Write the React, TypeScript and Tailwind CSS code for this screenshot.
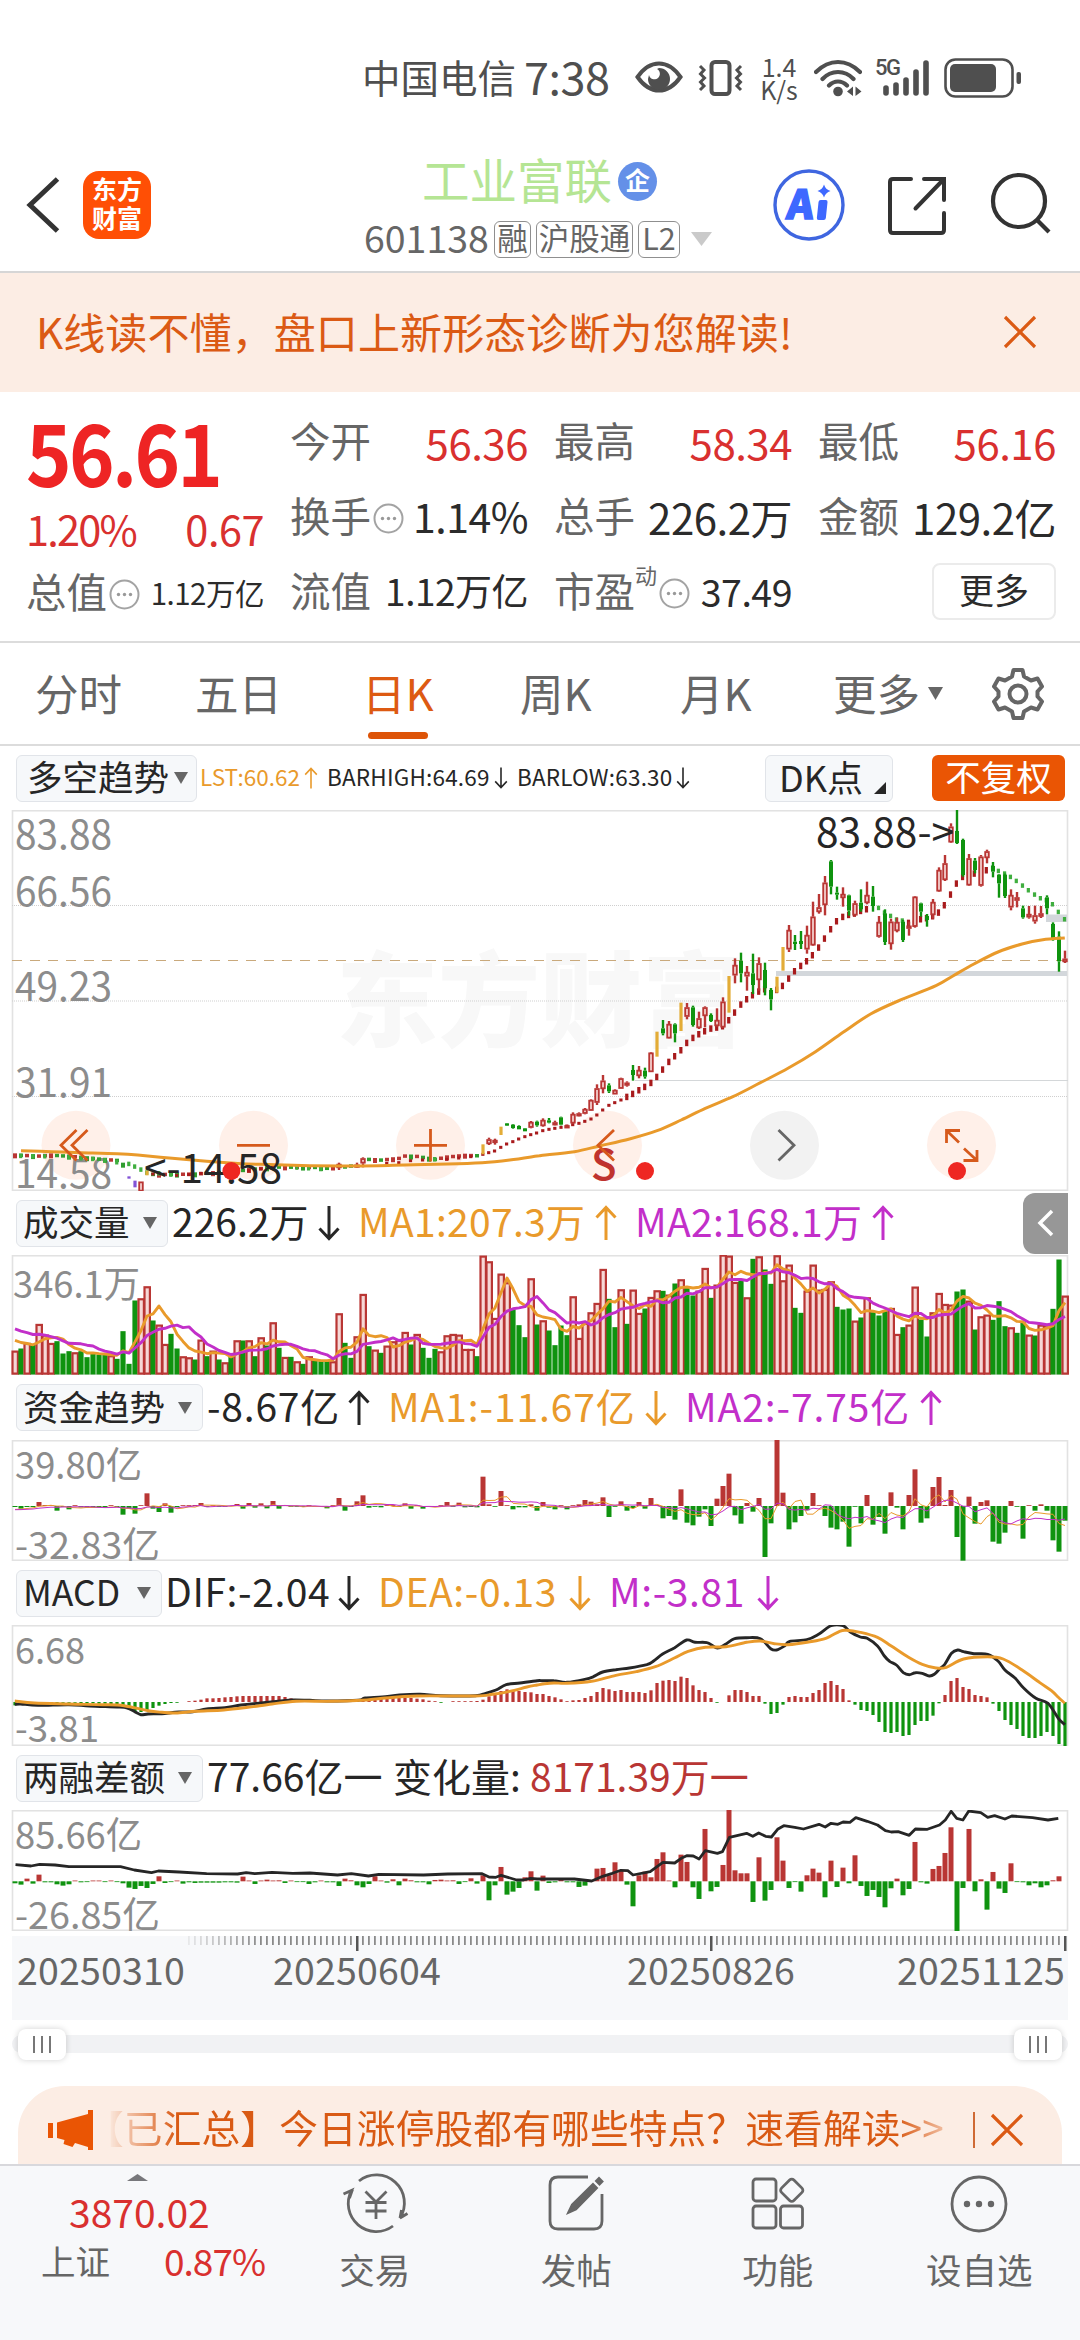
import type { ReactNode } from "react";
import clsx from "clsx";

const RED = "#b93634";
const GREEN = "#0f930f";
const ORANGE = "#e99a2b";
const PURPLE = "#c22fc9";
const INK = "#262626";
const FONT = '"Noto Sans CJK SC", "Noto Sans", sans-serif';

// One bar per trading day, 6px apart, first one centred on x=15.
const DAYS = 176;
const barX = (i: number) => 15 + 6 * i;

const VOLUME = [
  483, 477, 460, 465, 403, 435, 460, 455, 492, 485, 488, 485, 503, 490, 495, 495, 497, 508, 425, 523, 333, 326, 290, 393,
  405, 463, 433, 477, 500, 503, 510, 450, 500, 483, 510, 518, 500, 452, 453, 452, 500, 443, 468, 398, 475, 502, 502, 515,
  523, 500, 513, 515, 515, 515, 371, 460, 505, 440, 313, 470, 480, 490, 468, 455, 450, 427, 465, 433, 475, 505, 478, 485,
  437, 433, 435, 478, 478, 500, 198, 215, 385, 252, 278, 360, 407, 443, 266, 405, 392, 423, 467, 408, 437, 320, 445, 400,
  368, 340, 238, 328, 413, 299, 403, 300, 370, 357, 322, 302, 304, 315, 282, 269, 293, 318, 303, 235, 325, 285, 195, 198,
  277, 272, 323, 208, 200, 240, 283, 197, 272, 225, 355, 370, 303, 225, 300, 298, 275, 352, 360, 357, 393, 384, 323, 368,
  378, 365, 355, 433, 413, 405, 291, 390, 441, 368, 310, 343, 345, 306, 300, 333, 420, 380, 375, 391, 335, 410, 413, 430,
  397, 435, 438, 405, 405, 358, 210, 318,
].map((v) => (555 - v) / 3);

// Days that closed lower; shared by the volume bars and the flat part of the candles.
const DOWN_DAYS = new Set([
  1, 3, 7, 8, 9, 11, 12, 13, 14, 15, 17, 18, 19, 20, 23, 26, 27, 30, 32, 34, 36, 38, 40, 42, 44, 46, 48, 50, 51, 52, 55, 56,
  59, 61, 66, 68, 69, 70, 77, 83, 84, 85, 87, 89, 90, 91, 92, 99, 100, 102, 105, 108, 110, 112, 113, 116, 121, 123, 125, 126,
  130, 131, 137, 138, 139, 141, 143, 144, 145, 148, 151, 152, 157, 158, 160, 163, 164, 165, 167, 168, 170, 173, 174,
]);

const FUNDS = [
  -3, -8, -3, -3, 12, 3, 1, -14, -3, -10, 1, -4, -5, -5, -5, -3, 2, -3, -26, -8, -23, 2, 38, -8, -18, 8, -20, -3, 2, 1, 3, 9,
  -2, 1, -1, -2, 0, 6, -8, 9, -5, 8, -7, 15, -8, 1, -2, -1, -3, 1, -2, -2, -7, 2, 24, -14, -3, 14, 32, -5, -2, -4, 2, 1, -3,
  8, -8, 3, -8, -2, -3, 1, 12, -2, 10, -4, -3, -4, 88, 5, -1, 45, 2, -10, -4, -4, 5, -14, 12, -5, -10, 2, -10, 2, 5, 18, 13,
  5, 26, -33, -2, 14, -14, -6, 12, -8, 24, 3, -37, -30, -41, 50, -50, -58, -32, -10, -60, 22, 60, 97, -28, -53, 9, -17, 24,
  -153, -52, 198, 40, -70, -49, -30, -13, 39, 2, -30, -65, -70, -47, -122, -2, -52, 33, -56, -33, -83, 41, -5, -70, 33, 110,
  -50, -37, 57, 87, 3, 48, -93, -164, 28, -53, 12, 17, -107, -113, -80, 15, -2, -98, 2, -14, 5, -14, -103, -137, -44,
].map((v) => v / 3);

const MACD = [
  -10, -9, -8, -7, -6, -5, -4, -3, -2, -1, -2, -3, -4, -4, -5, -5, -6, -6, -12, -22, -30, -30, -26, -18, -11, -6, -3, -2, 0, 2,
  4, 7, 11, 11, 12, 14, 15, 17, 18, 18, 18, 18, 18, 18, 18, 15, 11, 9, 7, 6, 3, 1, 1, 1, 1, 1, 1, 3, 8, 9, 10, 11, 12, 12, 13,
  13, 12, 10, 8, 4, 1, -2, 0, 1, 2, 2, 2, 3, 7, 17, 25, 33, 38, 36, 33, 30, 29, 24, 24, 18, 14, 8, 2, 5, 6, 12, 18, 30, 42,
  38, 33, 36, 30, 30, 30, 27, 35, 57, 64, 66, 63, 76, 72, 50, 36, 30, 12, -2, 0, 20, 36, 36, 30, 18, 18, -5, -36, -33, -8, 15,
  18, 15, 15, 27, 36, 57, 63, 51, 39, 5, -8, -24, -27, -39, -60, -90, -93, -90, -102, -99, -69, -57, -57, -41, -4, 21, 63, 72,
  45, 39, 21, 18, 14, -5, -27, -54, -69, -81, -102, -108, -108, -102, -90, -102, -126, -132,
].map((v) => v / 3);

const MARGIN = [
  -6, -10, 8, -7, 20, -3, -3, -9, -13, -9, 1, -3, -2, 1, 2, -2, 1, -2, -6, -19, -23, -14, -20, -8, 15, -5, -2, 1, -7, -3, -5,
  -4, -4, -4, -4, -3, -3, -4, 14, 2, -8, 1, 5, 2, 3, -5, 2, -2, -2, -8, -3, 1, -3, -3, -14, 8, 3, -12, -18, -8, 15, 2, -4, 6,
  -12, 8, 3, -3, -3, -9, 4, 5, 1, 3, -8, -2, 9, -7, 18, -57, -12, 43, -40, -31, -20, 12, 30, -28, 17, -5, -3, 8, -3, -3, -17,
  -13, 2, 38, 40, 18, 57, 34, -10, -75, 18, 29, 12, 67, 87, 2, -18, 80, 58, -18, -53, 157, -30, -17, 49, 214, 33, 24, 24, -62,
  72, -58, -26, 132, 62, -20, -1, -31, 18, 38, 26, -48, 62, -17, 41, -6, 78, -14, -44, -26, -47, -78, -21, 8, -42, -23, 118,
  -3, -7, 37, 46, 85, 162, -149, -20, 157, -30, 6, -85, 28, -22, -35, 54, -1, -3, -12, -6, -18, -12, 3, 15,
].map((v) => v / 3);

// Curves are stored as two halves of the 1080px canvas, each on a 1568-wide
// grid with three units per pixel vertically.
type Pts = [number, number][];
const GRID_X = 1568 / 540;

function toCanvas(left: Pts, right: Pts, top: number): Pts {
  return [
    ...left.map(([x, y]) => [x / GRID_X, (y - top) / 3] as [number, number]),
    ...right.map(([x, y]) => [540 + x / GRID_X, (y - top) / 3] as [number, number]),
  ];
}

const linePath = (pts: Pts) => pts.map(([x, y], i) => `${i ? "L" : "M"}${x.toFixed(1)} ${y.toFixed(1)}`).join("");

// Catmull-Rom so the long averages come out round
function smoothPath(pts: Pts) {
  let d = `M${pts[0][0].toFixed(1)} ${pts[0][1].toFixed(1)}`;
  for (let i = 0; i < pts.length - 1; i++) {
    const p0 = pts[Math.max(i - 1, 0)];
    const p1 = pts[i];
    const p2 = pts[i + 1];
    const p3 = pts[Math.min(i + 2, pts.length - 1)];
    const c = [p1[0] + (p2[0] - p0[0]) / 6, p1[1] + (p2[1] - p0[1]) / 6, p2[0] - (p3[0] - p1[0]) / 6, p2[1] - (p3[1] - p1[1]) / 6, p2[0], p2[1]];
    d += "C" + c.map((n) => n.toFixed(1)).join(" ");
  }
  return d;
}

// Moving average over n days; `before` stands in for the days left of the chart.
function movingAverage(values: number[], n: number, before: number) {
  return values.map((_, i) => {
    let sum = 0;
    for (let k = i - n + 1; k <= i; k++) sum += k < 0 ? before : values[k];
    return sum / n;
  });
}

const PRICE_MA = toCanvas(
  [[61, 1232], [150, 1235], [235, 1238], [340, 1241], [400, 1245], [500, 1255], [600, 1264], [700, 1271], [800, 1274], [900, 1277], [1000, 1278], [1100, 1277], [1200, 1274], [1300, 1272], [1400, 1268], [1480, 1260], [1560, 1248]],
  [[8, 1246], [100, 1235], [176, 1217], [260, 1197], [340, 1172], [410, 1140], [480, 1105], [560, 1070], [640, 1028], [720, 985], [800, 935], [880, 877], [960, 822], [1040, 783], [1150, 737], [1200, 707], [1260, 672], [1330, 636], [1400, 612], [1460, 599], [1524, 594]],
  210,
);

const DIF = toCanvas(
  [[43, 433], [60, 432], [110, 436], [200, 434], [260, 438], [340, 441], [370, 444], [391, 455], [409, 464], [430, 462], [470, 461], [520, 456], [560, 455], [600, 447], [653, 443], [700, 435], [757, 429], [809, 424], [850, 420], [900, 421], [950, 423], [1040, 421], [1060, 414], [1110, 411], [1160, 405], [1220, 403], [1280, 407], [1380, 407], [1410, 400], [1440, 390], [1470, 374], [1510, 369], [1560, 362]],
  [[8, 362], [40, 362], [78, 367], [130, 358], [155, 350], [182, 336], [220, 329], [260, 324], [310, 314], [330, 303], [356, 282], [391, 263], [426, 240], [450, 247], [485, 248], [515, 264], [540, 252], [565, 236], [600, 233], [640, 236], [670, 266], [687, 270], [710, 258], [725, 244], [775, 239], [810, 222], [845, 197], [880, 197], [900, 215], [930, 231], [950, 235], [980, 258], [1000, 288], [1015, 304], [1035, 315], [1055, 338], [1072, 344], [1090, 338], [1110, 340], [1130, 348], [1145, 343], [1160, 327], [1175, 313], [1195, 280], [1213, 270], [1230, 275], [1260, 281], [1300, 283], [1330, 303], [1350, 330], [1380, 355], [1405, 385], [1440, 415], [1475, 430], [1505, 475], [1524, 494]],
  195,
);

const DEA = toCanvas(
  [[43, 423], [100, 429], [200, 432], [300, 434], [360, 437], [430, 452], [470, 457], [510, 459], [570, 454], [650, 450], [720, 442], [790, 432], [860, 424], [960, 424], [1050, 421], [1110, 415], [1210, 408], [1380, 408], [1430, 403], [1480, 394], [1530, 381], [1560, 375]],
  [[8, 372], [40, 369], [78, 370], [150, 364], [220, 346], [280, 335], [335, 320], [390, 294], [430, 274], [480, 262], [540, 260], [600, 247], [640, 243], [680, 251], [720, 254], [780, 246], [830, 235], [870, 214], [890, 211], [930, 217], [980, 232], [1020, 258], [1070, 292], [1110, 313], [1150, 324], [1180, 322], [1230, 297], [1300, 290], [1345, 297], [1400, 330], [1450, 367], [1485, 392], [1505, 412], [1524, 430]],
  195,
);

const MARGIN_LINE = toCanvas(
  [[45, 914], [90, 918], [115, 913], [160, 915], [200, 920], [350, 920], [390, 930], [440, 938], [460, 933], [520, 936], [600, 941], [690, 942], [715, 938], [740, 941], [790, 937], [850, 940], [900, 939], [980, 945], [1020, 941], [1070, 948], [1100, 943], [1230, 945], [1300, 942], [1400, 941], [1420, 951], [1440, 952], [1455, 946], [1500, 960], [1520, 960], [1540, 955], [1560, 957]],
  [[8, 957], [100, 957], [150, 963], [182, 949], [210, 940], [235, 931], [255, 932], [270, 945], [320, 935], [357, 907], [391, 909], [410, 895], [426, 887], [445, 888], [462, 897], [480, 872], [515, 880], [530, 875], [550, 832], [600, 820], [618, 829], [635, 819], [655, 829], [672, 831], [690, 808], [708, 797], [740, 802], [765, 807], [810, 793], [828, 801], [845, 790], [865, 793], [880, 786], [900, 787], [917, 773], [950, 784], [980, 795], [1003, 812], [1020, 816], [1040, 815], [1072, 826], [1090, 807], [1125, 808], [1160, 795], [1177, 780], [1194, 754], [1210, 775], [1228, 780], [1245, 753], [1280, 758], [1300, 772], [1320, 767], [1350, 777], [1370, 768], [1430, 773], [1475, 780], [1505, 775]],
  750,
);

// day, kind (r hollow, g solid, y solid yellow, p purple), high, body top, body bottom, low
type Candle = [number, string, number, number, number, number];
const CANDLES: Candle[] = [
  [19, "p", 1308, 1309, 1316, 1316], [20, "p", 1322, 1322, 1342, 1342], [21, "r", 1325, 1325, 1354, 1354], [22, "y", 1292, 1292, 1306, 1306],
  [54, "r", 1268, 1272, 1284, 1290], [57, "r", 1268, 1274, 1282, 1284], [58, "r", 1252, 1255, 1270, 1282], [78, "y", 1212, 1213, 1243, 1243],
  [79, "r", 1193, 1198, 1212, 1215], [80, "r", 1196, 1200, 1206, 1214], [81, "y", 1160, 1160, 1185, 1185], [82, "g", 1149, 1150, 1157, 1158],
  [83, "g", 1152, 1154, 1164, 1166], [84, "g", 1156, 1158, 1168, 1168], [85, "g", 1164, 1165, 1174, 1174], [86, "r", 1143, 1146, 1163, 1165],
  [87, "g", 1142, 1145, 1156, 1160], [88, "r", 1135, 1140, 1158, 1160], [89, "g", 1134, 1141, 1148, 1150], [90, "r", 1142, 1147, 1153, 1156],
  [91, "g", 1130, 1132, 1154, 1156], [92, "r", 1155, 1156, 1163, 1164], [93, "r", 1117, 1122, 1150, 1152], [94, "r", 1117, 1120, 1127, 1129],
  [95, "r", 1104, 1107, 1121, 1123], [96, "r", 1078, 1080, 1112, 1113], [97, "r", 1033, 1045, 1088, 1095], [98, "r", 1005, 1022, 1047, 1060],
  [99, "g", 1030, 1036, 1054, 1059], [100, "r", 1048, 1050, 1063, 1063], [101, "r", 1013, 1015, 1046, 1046], [102, "r", 1024, 1028, 1036, 1040],
  [103, "g", 975, 990, 1005, 1022], [104, "r", 978, 990, 1008, 1015], [105, "g", 983, 992, 1010, 1016], [106, "r", 936, 938, 996, 996],
  [107, "y", 875, 875, 950, 950], [108, "g", 840, 865, 880, 886], [109, "r", 843, 852, 895, 896], [110, "g", 850, 853, 880, 907],
  [111, "y", 788, 788, 873, 873], [112, "r", 789, 802, 830, 838], [113, "g", 797, 802, 855, 860], [114, "r", 815, 835, 864, 867],
  [115, "r", 799, 802, 828, 862], [116, "g", 820, 825, 843, 846], [117, "r", 805, 840, 858, 860], [118, "r", 772, 785, 862, 864],
  [119, "y", 708, 708, 818, 818], [120, "r", 655, 675, 706, 730], [121, "g", 638, 662, 700, 727], [122, "r", 678, 696, 709, 752],
  [123, "g", 641, 700, 735, 762], [124, "r", 652, 670, 720, 752], [125, "g", 668, 690, 745, 766], [126, "g", 744, 750, 778, 811],
  [127, "y", 710, 710, 758, 758], [128, "y", 621, 621, 692, 692], [129, "r", 555, 570, 628, 636], [130, "g", 585, 605, 612, 630],
  [131, "g", 573, 603, 612, 627], [132, "r", 557, 585, 628, 641], [133, "r", 485, 530, 616, 618], [134, "r", 462, 502, 516, 521],
  [135, "r", 408, 428, 495, 526], [136, "g", 360, 364, 440, 463], [137, "g", 440, 458, 464, 479], [138, "r", 442, 462, 474, 500],
  [139, "g", 464, 466, 512, 527], [140, "r", 482, 490, 526, 527], [141, "g", 448, 488, 508, 515], [142, "r", 425, 465, 489, 493],
  [143, "g", 438, 470, 498, 515], [144, "r", 528, 546, 590, 593], [145, "g", 508, 520, 606, 615], [146, "r", 536, 545, 612, 629],
  [147, "r", 533, 546, 573, 577], [148, "g", 540, 545, 600, 606], [149, "r", 545, 557, 566, 587], [150, "r", 468, 470, 560, 563],
  [151, "g", 488, 490, 515, 530], [152, "g", 522, 528, 540, 560], [153, "r", 477, 486, 525, 536], [154, "r", 382, 390, 454, 456],
  [155, "r", 345, 370, 420, 423], [156, "r", 250, 260, 307, 309], [157, "g", 210, 273, 309, 312], [158, "g", 296, 300, 405, 410],
  [159, "r", 342, 355, 436, 438], [160, "g", 354, 362, 390, 400], [161, "r", 345, 350, 437, 440], [162, "r", 329, 334, 354, 370],
  [163, "g", 366, 378, 395, 412], [164, "g", 402, 404, 430, 473], [165, "g", 401, 404, 468, 474], [166, "r", 448, 465, 502, 511],
  [167, "r", 456, 472, 482, 502], [168, "g", 497, 505, 532, 536], [169, "r", 498, 522, 532, 536], [170, "r", 497, 526, 544, 551],
  [171, "r", 498, 520, 530, 534], [172, "g", 466, 472, 505, 523], [173, "g", 547, 552, 594, 602], [174, "g", 574, 590, 664, 695],
  [175, "r", 632, 656, 666, 669],
];
const CANDLE_DAYS = new Set(CANDLES.map((c) => c[0]));

// Price level of the quiet stretch on the left, [day, level]
const QUIET: Pts = [
  [0, 1246], [4, 1249], [6, 1246], [10, 1251], [14, 1258], [17, 1262], [18, 1274], [23, 1304], [26, 1304], [30, 1303], [36, 1296],
  [40, 1288], [44, 1282], [50, 1283], [53, 1287], [56, 1279], [59, 1259], [61, 1261], [64, 1256], [65, 1249], [67, 1250], [70, 1259],
  [72, 1252], [75, 1247], [77, 1248],
];

const DOTS_UP = toCanvas(
  [[444, 1302], [513, 1306], [548, 1304], [583, 1300], [618, 1299], [653, 1298], [687, 1296], [722, 1292], [757, 1287], [792, 1283], [1123, 1270], [1158, 1268], [1192, 1262], [1227, 1260], [1297, 1258], [1332, 1254], [1367, 1250], [1402, 1243], [1419, 1238], [1436, 1233], [1454, 1222], [1471, 1212], [1489, 1205], [1506, 1197], [1524, 1190], [1541, 1184], [1558, 1179]],
  [[8, 1172], [26, 1168], [43, 1165], [61, 1162], [78, 1158], [95, 1154], [113, 1150], [130, 1144], [148, 1137], [165, 1125], [182, 1110], [200, 1096], [217, 1088], [235, 1080], [252, 1070], [269, 1061], [287, 1050], [304, 1040], [322, 1028], [339, 1010], [356, 988], [374, 965], [391, 948], [409, 930], [426, 908], [444, 893], [461, 882], [478, 873], [496, 865], [513, 862], [530, 858], [548, 840], [565, 817], [583, 793], [600, 777], [617, 765], [635, 754], [652, 747], [687, 749], [704, 737], [722, 715], [739, 693], [757, 677], [774, 663], [791, 645], [809, 622], [826, 595], [844, 567], [861, 543], [879, 530], [896, 524], [913, 520], [931, 512], [948, 507], [1070, 548], [1087, 550], [1105, 537], [1122, 534], [1140, 528], [1157, 517], [1174, 495], [1192, 463], [1209, 430], [1227, 410], [1244, 405], [1261, 400], [1279, 388], [1296, 390]],
  210,
);
const DOTS_DOWN = toCanvas(
  [[60, 1247], [95, 1248], [130, 1248], [200, 1250], [235, 1254], [269, 1256], [304, 1260], [339, 1266], [374, 1271], [391, 1279], [409, 1288], [426, 1297], [461, 1299], [496, 1303], [862, 1282], [896, 1284], [931, 1286], [1262, 1257]],
  [[983, 503], [1000, 517], [1018, 527], [1035, 538], [1052, 541], [1314, 382], [1331, 392], [1349, 400], [1366, 410], [1383, 422], [1401, 436], [1418, 450], [1436, 463], [1453, 474], [1470, 480], [1488, 492], [1505, 515], [1523, 537]],
  210,
);

function levelAt(day: number) {
  const k = Math.max(1, QUIET.findIndex(([d]) => d >= day));
  const [d0, y0] = QUIET[k - 1];
  const [d1, y1] = QUIET[k];
  return y0 + ((day - d0) / (d1 - d0)) * (y1 - y0);
}

function AxisText({ x, y, w, size = 37, fill = "#8c8c8c", children }: { x: number; y: number; w: number; size?: number; fill?: string; children: string }) {
  return (
    <text x={x} y={y} textLength={w} lengthAdjust="spacingAndGlyphs" fontSize={size} fill={fill} fontFamily={FONT}>
      {children}
    </text>
  );
}

function Frame({ h, children }: { h: number; children: ReactNode }) {
  return (
    <svg className="block shrink-0" width="1080" height={h} viewBox={`0 0 1080 ${h}`}>
      <rect x="12.5" y="0.75" width="1055" height={h - 1.5} fill="none" stroke="#e2e2e2" strokeWidth="1.6" />
      {children}
    </svg>
  );
}

function PriceChart() {
  const fills: Record<string, string> = { y: "#e3ac37", p: "#8253d6", g: GREEN, r: RED };
  return (
    <Frame h={381}>
      <text x="336" y="229" fontSize="103" fontWeight="900" fill="#f8f8f8" textLength="408" lengthAdjust="spacingAndGlyphs" fontFamily={FONT}>
        东方财富
      </text>
      {[95.5, 191, 286.5].map((y) => (
        <line key={y} x1="12" x2="1068" y1={y} y2={y} stroke="#cfcfcf" strokeWidth="1" strokeDasharray="1 1" />
      ))}
      <line x1="635" x2="1068" y1="270.5" y2="270.5" stroke="#d4d7d9" />
      <rect x="776" y="161" width="291" height="5" fill="#d3d7db" />
      <rect x="1046" y="104.5" width="21" height="7.5" fill="#d3d7db" />
      <line x1="12" x2="1068" y1="150.5" y2="150.5" stroke="#c9a97c" strokeWidth="1.2" strokeDasharray="10 8" />
      {[76, 253.5, 430.5, 607.5, 784.5, 961.5].map((x) => (
        <circle key={x} cx={x} cy="335.3" r="34.5" fill={x === 784.5 ? "#f2f2f2" : "#fff0e9"} />
      ))}
      <AxisText x={15} y={38.5} w={97} size={40}>83.88</AxisText>
      <AxisText x={15} y={96} w={97} size={40}>66.56</AxisText>
      <AxisText x={15} y={191} w={97} size={40}>49.23</AxisText>
      <AxisText x={15} y={286.5} w={97} size={40}>31.91</AxisText>
      <AxisText x={15} y={377.5} w={97} size={40}>14.58</AxisText>
      {Array.from({ length: 78 }, (_, i) => i)
        .filter((i) => !CANDLE_DAYS.has(i))
        .map((i) => (
          <rect
            key={i}
            x={barX(i) - 2}
            y={(levelAt(i) - 210) / 3 - 2}
            width="4"
            height={i % 3 ? 3.5 : 5}
            fill={DOWN_DAYS.has(i) ? "#2f9d2f" : RED}
          />
        ))}
      {DOTS_UP.map(([x, y], i) => (
        <rect key={i} x={x - 1.6} y={y - (y < 290 ? 3 : 1.5)} width="3.2" height={y < 290 ? 6.5 : 3} fill="#a81a1c" />
      ))}
      {DOTS_DOWN.map(([x, y], i) => (
        <rect key={i} x={x - 1.6} y={y - 2} width="3.2" height="4.5" fill="#3fae3f" />
      ))}
      {CANDLES.map(([day, kind, hi, top, bottom, lo]) => {
        const x = barX(day);
        const [h, t, b, l] = [hi, top, bottom, lo].map((v) => (v - 210) / 3);
        const fill = fills[kind];
        if (kind === "y" || kind === "p") return <rect key={day} x={x - 1.6} y={t} width="3.2" height={b - t} fill={fill} />;
        return (
          <g key={day}>
            <rect x={x - 1.2} y={h} width="2.4" height={t - h} fill={fill} />
            <rect x={x - 1.2} y={b} width="2.4" height={Math.max(0, l - b)} fill={fill} />
            {kind === "g" ? (
              <rect x={x - 2} y={t} width="4" height={b - t} fill={fill} />
            ) : (
              <rect x={x - 1.8} y={t + 0.7} width="3.6" height={Math.max(1.5, b - t - 1.4)} fill="#f3cfcd" stroke={fill} strokeWidth="1.8" />
            )}
          </g>
        );
      })}
      <path d={smoothPath(PRICE_MA)} fill="none" stroke={ORANGE} strokeWidth="3" />
      <AxisText x={816} y={36.5} w={138} size={40} fill={INK}>{"83.88->"}</AxisText>
      <AxisText x={144} y={373} w={138} size={40} fill={INK}>{"<-14.58"}</AxisText>
      <text x="591" y="369.5" fontSize="42" fontWeight="500" fill="#bf322e" fontFamily={FONT}>S</text>
      {[231.4, 645, 957].map((x) => (
        <circle key={x} cx={x} cy="361" r="9" fill="#ee2722" />
      ))}
      <g fill="none" stroke="#d65a1c" strokeWidth="2.8">
        <path d="M76.5 320L61 335.3L76.5 350.5M87.5 320L72 335.3L87.5 350.5" />
        <path d="M237 335.3H270" />
        <path d="M414 335.3H447M430.5 319V351.5" />
        <path d="M614 320L598 335.3L614 350.5" />
        <path d="M946.5 333V320.5H960M946.5 320.5L959 332.5M977 340V350.5H963.5M977 350.5L964 338.5" />
      </g>
      <path d="M778.5 320L794 335.3L778.5 350.5" fill="none" stroke="#666" strokeWidth="2.8" />
    </Frame>
  );
}

function VolumeChart() {
  const toLine = (values: number[]) => linePath(values.map((v, i) => [barX(i), 119.5 - v]));
  return (
    <Frame h={120}>
      <AxisText x={13} y={43} w={127}>346.1万</AxisText>
      {VOLUME.map((v, i) =>
        DOWN_DAYS.has(i) ? (
          <rect key={i} x={barX(i) - 2.6} y={119.5 - v} width="5.2" height={v} fill={GREEN} />
        ) : (
          <rect key={i} x={barX(i) - 2.5} y={120.6 - v} width="5.4" height={v - 2} fill="#f6d8d6" stroke={RED} strokeWidth="2.2" />
        ),
      )}
      <path d={toLine(movingAverage(VOLUME, 5, 36.7))} fill="none" stroke={ORANGE} strokeWidth="2.9" strokeLinejoin="round" />
      <path d={toLine(movingAverage(VOLUME, 10, 48))} fill="none" stroke={PURPLE} strokeWidth="2.9" strokeLinejoin="round" />
    </Frame>
  );
}

function SignedBars({ values, zero, w = 5 }: { values: number[]; zero: number; w?: number }) {
  return (
    <>
      {values.map((v, i) => {
        const h = Math.max(Math.abs(v), v === 0 ? 0 : 0.8);
        return <rect key={i} x={barX(i) - w / 2} y={v > 0 ? zero - h : zero} width={w} height={h} fill={v > 0 ? RED : GREEN} />;
      })}
    </>
  );
}

function FundsChart() {
  const toLine = (values: number[]) => linePath(values.map((v, i) => [barX(i), 66 - v]));
  return (
    <Frame h={121}>
      <AxisText x={15} y={39} w={127}>39.80亿</AxisText>
      <AxisText x={15} y={118.5} w={145}>-32.83亿</AxisText>
      <SignedBars values={FUNDS} zero={66} />
      <path d={toLine(movingAverage(FUNDS, 5, -4))} fill="none" stroke={ORANGE} strokeWidth="1" />
      <path d={toLine(movingAverage(FUNDS, 10, -4))} fill="none" stroke={PURPLE} strokeWidth="1" />
    </Frame>
  );
}

function MacdChart() {
  return (
    <Frame h={121}>
      <AxisText x={15} y={38.7} w={70}>6.68</AxisText>
      <AxisText x={15} y={117} w={84}>-3.81</AxisText>
      <SignedBars values={MACD} zero={77} w={3.2} />
      <path d={smoothPath(DIF)} fill="none" stroke={INK} strokeWidth="2.9" />
      <path d={smoothPath(DEA)} fill="none" stroke={ORANGE} strokeWidth="2.9" />
    </Frame>
  );
}

function MarginChart() {
  return (
    <Frame h={121}>
      <AxisText x={15} y={39} w={127}>85.66亿</AxisText>
      <AxisText x={15} y={118.5} w={145}>-26.85亿</AxisText>
      <SignedBars values={MARGIN} zero={71.3} />
      <path d={linePath(MARGIN_LINE)} fill="none" stroke={INK} strokeWidth="2.8" strokeLinejoin="round" />
    </Frame>
  );
}

function Arrow({ down, small }: { down?: boolean; small?: boolean }) {
  return (
    <svg
      className={clsx("shrink-0", down && "rotate-180", small ? "ml-1 mr-2 h-[22px] w-[14px]" : "h-9 w-[22px]")}
      viewBox="0 0 22 36"
      fill="none"
      stroke="currentColor"
      strokeWidth={small ? 2.6 : 3}
    >
      <path d="M11 35V2M1.5 12.5L11 2.5L20.5 12.5" />
    </svg>
  );
}

function Picker({ label, className }: { label: string; className?: string }) {
  return (
    <div className={clsx("ml-4 flex h-[47px] shrink-0 items-center justify-between rounded-md border border-[#e1e4e9] bg-[#f6f8fa] pl-1.5 pr-2.5 text-[35.5px] text-[#262626]", className)}>
      <span className="-mt-[5px]">{label}</span>
      <svg className="h-3 w-3.5" viewBox="0 0 14 12" fill="#666">
        <path d="M0 0H14L7 12Z" />
      </svg>
    </div>
  );
}

function Reading({ text, className, arrow }: { text: string; className: string; arrow?: "up" | "down" }) {
  return (
    <div className={clsx("flex shrink-0 items-center justify-between text-[39px]", className)}>
      <span className="-mt-1.5">{text}</span>
      {arrow ? <Arrow down={arrow === "down"} /> : null}
    </div>
  );
}

function InfoDot() {
  return (
    <svg className="ml-0.5 size-[31px] shrink-0" viewBox="0 0 31 31">
      <circle cx="15.5" cy="15.5" r="14" fill="none" stroke="#a3a3a3" strokeWidth="2" />
      {[9.5, 15.5, 21.5].map((x) => (
        <circle key={x} cx={x} cy="15.5" r="1.7" fill="#999" />
      ))}
    </svg>
  );
}

function StatusBar() {
  return (
    <div className="flex h-[156px] items-center pl-[362px] text-[#4f4f4f]">
      <span className="-mt-0.5 w-[162px] text-[38.5px]">中国电信</span>
      <span className="-mt-1 w-[111px] text-[45px] tracking-[-0.5px]">7:38</span>
      <svg className="h-9 w-12" viewBox="0 0 48 36">
        <path d="M2.5 17Q12 3.5 24 3.5T45.5 17Q36 30.5 24 30.5T2.5 17Z" fill="none" stroke="currentColor" strokeWidth="4" />
        <path d="M24 8A11 11 0 1 1 13 19L14 15A5.5 5.5 0 1 0 22 9Z" fill="currentColor" />
      </svg>
      <svg className="ml-[15px] h-9 w-[46px]" viewBox="0 0 46 36" fill="none" stroke="currentColor">
        <rect x="13.5" y="2" width="18" height="32" rx="3.5" strokeWidth="4" />
        <path d="M2 6L6 10L2.5 14L6.5 18L2.5 22L6 26L2 30M43 6L39 10L42.5 14L38.5 18L42.5 22L39 26L43 30" strokeWidth="3" />
      </svg>
      <div className="ml-[12px] flex w-[46px] flex-col items-center text-[25px] leading-[23px]">
        <span>1.4</span>
        <span>K/s</span>
      </div>
      <svg className="ml-[12px] h-[38px] w-12" viewBox="0 0 48 38" fill="none" stroke="currentColor" strokeWidth="4.2">
        <path d="M2 13Q12 3 24 3T46 13M8.5 20Q15 13 24 13T39.5 20M15 26.5Q19 22.5 24 22.5T33 26.5" strokeLinecap="round" />
        <circle cx="24" cy="32.5" r="4.8" fill="currentColor" stroke="none" />
        <path d="M33 32.5L39 27.5V37ZM47.5 32.5L41.5 27.5V37Z" fill="currentColor" stroke="none" />
      </svg>
      <div className="ml-[13px] flex h-[38px] w-[56px]">
        <span className="-mr-[18px] font-['Roboto'] text-[22px] leading-[18px] font-medium tracking-[-1.5px]">5G</span>
        <svg className="h-[38px] w-[50px] shrink-0" viewBox="0 0 50 38" stroke="currentColor" strokeWidth="5.6" strokeLinecap="round">
          <path d="M4 29V34M14 26V34M24 21V34M34 13V34M44 4V34" />
        </svg>
      </div>
      <svg className="ml-[13px] h-10 w-[78px] shrink-0" viewBox="0 0 78 40">
        <rect x="1.5" y="1.5" width="67" height="37" rx="10" fill="none" stroke="currentColor" strokeWidth="2.6" />
        <rect x="6" y="6" width="46" height="28" rx="5" fill="currentColor" />
        <rect x="72.5" y="14" width="4.5" height="12" rx="2" fill="currentColor" />
      </svg>
    </div>
  );
}

function Tag({ text, className }: { text: string; className: string }) {
  return (
    <span className={clsx("mr-[5px] flex h-[37px] shrink-0 items-center justify-center rounded-md border border-[#8f8f8f] text-[30.5px] leading-[35px] whitespace-nowrap", className)}>
      <span className="-mt-1">{text}</span>
    </span>
  );
}

function Header() {
  return (
    <header className="flex h-[117px] border-b-2 border-[#d6d6d6] text-[#2d2d2d]">
      <svg className="mt-[20px] ml-[25px] h-[58px] w-[36px]" viewBox="0 0 36 58" fill="none" stroke="#333" strokeWidth="5">
        <path d="M32.5 3L5 29L32.5 55" />
      </svg>
      <div className="mt-[15px] ml-[22px] flex size-[68px] flex-col items-center justify-center rounded-2xl bg-[#ff4f05] text-[25px] leading-[29px] font-bold text-white">
        <span className="-mt-1">东方</span>
        <span>财富</span>
      </div>
      <div className="ml-[213px] w-[409px]">
        <div className="ml-[58px] flex h-[58px] items-center">
          <span className="-mt-[13px] text-[47.5px] text-[#b5e594]">工业富联</span>
          <span className="-mt-[6px] ml-[6px] flex size-[39px] items-center justify-center rounded-full bg-[#6490e8] text-[25px] font-bold text-white">
            <span className="-mt-1">企</span>
          </span>
        </div>
        <div className="mt-[7px] flex items-center text-[#666]">
          <span className="-mt-1.5 w-[130px] text-[37.5px] leading-[37px]">601138</span>
          <Tag text="融" className="w-[37px]" />
          <Tag text="沪股通" className="w-[97px]" />
          <Tag text="L2" className="w-[42px]" />
          <svg className="ml-[6px] h-[14px] w-[21px]" viewBox="0 0 21 14" fill="#cacaca"><path d="M0 0H21L10.5 14Z" /></svg>
        </div>
      </div>
      <svg className="mt-[13px] h-[72px] w-[72px]" viewBox="0 0 72 72">
        <circle cx="36" cy="36" r="34" fill="none" stroke="#3f66e0" strokeWidth="3.4" />
        <g transform="skewX(-6) translate(4 0)">
          <text x="14" y="50" fontSize="40" fontWeight="900" fill="#3e68ff" stroke="#3e68ff" strokeWidth="1.5" fontFamily={FONT}>A</text>
          <rect x="45" y="31" width="9" height="20" rx="2" fill="#3e68ff" />
        </g>
        <path d="M51 15.5Q52.5 20.5 57.5 22Q52.5 23.5 51 28.5Q49.5 23.5 44.5 22Q49.5 20.5 51 15.5Z" fill="#3e68ff" />
      </svg>
      <svg className="mt-[20px] ml-[42px] h-[60px] w-[60px]" viewBox="0 0 60 60" fill="none" stroke="#333" strokeWidth="4">
        <path d="M24 3H6Q3 3 3 6V54Q3 57 6 57H54Q57 57 57 54V37" strokeLinecap="round" />
        <path d="M37 3H57V24M56 4L28.5 32.5" strokeLinecap="round" />
      </svg>
      <svg className="mt-[16px] ml-[43px] h-[62px] w-[62px]" viewBox="0 0 62 62" fill="none" stroke="#333" strokeWidth="4.2">
        <circle cx="29" cy="29" r="26" />
        <path d="M47 48L59 60" />
      </svg>
    </header>
  );
}

function Cross({ className }: { className?: string }) {
  return (
    <svg className={clsx("size-[34px] shrink-0", className)} viewBox="0 0 34 34" fill="none" stroke="#db5a14" strokeWidth="3.2">
      <path d="M2 2L32 32M32 2L2 32" />
    </svg>
  );
}

function Stat({ label, value, tone, info, size = "text-[42px]", sup }: { label: string; value: string; tone?: string; info?: boolean; size?: string; sup?: string }) {
  return (
    <div className="flex h-[75px] items-center text-[40.5px] text-[#666]">
      <span className="-mt-[5px]">{label}</span>
      {sup ? <span className="-mt-[38px] text-[22px]">{sup}</span> : null}
      {info ? <InfoDot /> : null}
      <span className={clsx("-mt-[4px] ml-auto tracking-[-0.5px]", size, tone ?? "text-[#2b2b2b]")}>{value}</span>
    </div>
  );
}

function Quote() {
  return (
    <section className="flex h-[251px] gap-[26px] border-b-2 border-[#dcdcdc] pt-[14px] pl-[26px] whitespace-nowrap">
      <div className="w-[238px]">
        <div className="h-[93px] origin-left scale-x-90 pt-[3px] text-[86px] leading-[82px] font-bold tracking-[-3px] text-[#ee2424]">56.61</div>
        <div className="flex h-[62px] items-center justify-between text-[41.5px] text-[#d9302f]">
          <span className="-mt-1 tracking-[-1.8px]">1.20%</span>
          <span className="-mt-1 tracking-[-0.5px]">0.67</span>
        </div>
        <div className="-mt-1">
          <Stat label="总值" info value="1.12万亿" size="text-[29.5px]" />
        </div>
      </div>
      <div className="w-[238px]">
        <Stat label="今开" value="56.36" tone="text-[#d9302f]" />
        <Stat label="换手" info value="1.14%" size="text-[41px]" />
        <Stat label="流值" value="1.12万亿" size="text-[37px]" />
      </div>
      <div className="w-[238px]">
        <Stat label="最高" value="58.34" tone="text-[#d9302f]" />
        <Stat label="总手" value="226.2万" />
        <Stat label="市盈" sup="动" info value="37.49" size="text-[37.5px]" />
      </div>
      <div className="w-[238px]">
        <Stat label="最低" value="56.16" tone="text-[#d9302f]" />
        <Stat label="金额" value="129.2亿" />
        <button className="mt-[7px] ml-auto flex h-[57px] w-[124px] items-center justify-center rounded-lg border-2 border-[#ebebeb] text-[35px] text-[#2b2b2b]">
          <span className="-mt-1">更多</span>
        </button>
      </div>
    </section>
  );
}

const TABS = [
  { label: "分时", width: "w-[160px]" },
  { label: "五日", width: "w-[167px]" },
  { label: "日K", width: "w-[158px]", active: true },
  { label: "周K", width: "w-[160px]" },
  { label: "月K", width: "w-[153px]" },
  { label: "更多", width: "w-[95px]" },
];

function Tabs() {
  return (
    <nav className="flex h-[104px] items-center border-b-2 border-[#dcdcdc] pl-[35px] text-[43.5px] text-[#666]">
      {TABS.map((tab) => (
        <div key={tab.label} className={clsx("flex h-full shrink-0 flex-col pt-[21px]", tab.width, tab.active && "text-[#dd5a12]")}>
          <span className="leading-[58px]">{tab.label}</span>
          {tab.active ? <span className="mt-[10px] ml-[6px] h-[7px] w-[60px] rounded-full bg-[#dd5408]" /> : null}
        </div>
      ))}
      <svg className="h-[13px] w-[15px]" viewBox="0 0 15 13" fill="#666"><path d="M0 0H15L7.5 13Z" /></svg>
      <svg className="ml-[48px] size-[54px]" viewBox="0 0 54 54" fill="none" stroke="#666" strokeWidth="4" strokeLinejoin="round">
        <path d="M22.5 3H31.5L33 9.5L40 13.5L46.5 11.5L51 19.5L46.5 24.5V29.5L51 34.5L46.5 42.5L40 40.5L33 44.5L31.5 51H22.5L21 44.5L14 40.5L7.5 42.5L3 34.5L7.5 29.5V24.5L3 19.5L7.5 11.5L14 13.5L21 9.5Z" />
        <circle cx="27" cy="27" r="8.5" />
      </svg>
    </nav>
  );
}

function IndicatorRow() {
  return (
    <div className="flex h-[64px] items-center text-[22.5px] whitespace-nowrap text-[#262626]">
      <div className="ml-4 flex h-[47px] w-[181px] items-center justify-between rounded-md border border-[#e1e4e9] bg-[#f6f8fa] pl-2.5 pr-2 text-[35.5px]">
        <span className="-mt-[5px]">多空趋势</span>
        <svg className="h-3 w-3.5" viewBox="0 0 14 12" fill="#666"><path d="M0 0H14L7 12Z" /></svg>
      </div>
      <div className="ml-[3px] flex w-[127px] items-center text-[#e99a2b]">
        <span className="-mt-[3px]">LST:60.62</span>
        <Arrow small />
      </div>
      <div className="flex w-[190px] items-center">
        <span className="-mt-[3px] tracking-[0.2px]">BARHIGH:64.69</span>
        <Arrow small down />
      </div>
      <div className="flex w-[248px] items-center">
        <span className="-mt-[3px] tracking-[0.2px]">BARLOW:63.30</span>
        <Arrow small down />
      </div>
      <div className="flex h-[47px] w-[128px] items-center justify-between rounded-md border border-[#e1e4e9] bg-[#f6f8fa] pr-1.5 pl-[13px] text-[36px]">
        <span className="-mt-[5px]">DK点</span>
        <svg className="mt-5 h-3 w-3" viewBox="0 0 12 12" fill="#262626"><path d="M12 0V12H0Z" /></svg>
      </div>
      <div className="ml-[39px] flex h-[46px] w-[133px] items-center justify-center rounded-md bg-[#ea5504] text-[35.5px] text-white">
        <span className="-mt-[5px]">不复权</span>
      </div>
    </div>
  );
}

function DateAxis() {
  return (
    <div className="mx-3 mt-[5px] h-[84px] bg-[#f7f8fa] text-[37.5px] tracking-[0.2px] text-[#666]">
      <svg className="block" width="1056" height="16" viewBox="0 0 1056 16">
        {Array.from({ length: DAYS - 29 }, (_, k) => k + 29).map((i) => {
          const major = i === 57 || i === 116 || i === 175;
          return (
            <rect
              key={i}
              x={barX(i) - 13}
              y="0"
              width={major ? 2.5 : 1.8}
              height={major ? 15 : 9}
              fill={major ? "#555" : "#8a8a8a"}
              opacity={Math.min(1, (i - 27) / 14)}
            />
          );
        })}
      </svg>
      <div className="-mt-[11px] flex">
        <span className="ml-[5px] w-[256px]">20250310</span>
        <span className="w-[354px]">20250604</span>
        <span className="w-[270px]">20250826</span>
        <span>20251125</span>
      </div>
    </div>
  );
}

function Thumb() {
  return (
    <div className="flex h-[31px] w-[48px] items-center justify-center gap-[6px] rounded-lg bg-white shadow-[0_0_6px_rgba(0,0,0,0.18)]">
      <span className="h-[17px] w-[2px] bg-[#777]" />
      <span className="h-[17px] w-[2px] bg-[#777]" />
      <span className="h-[17px] w-[2px] bg-[#777]" />
    </div>
  );
}

function RangeSlider() {
  return (
    <div className="mx-3 mt-[15px] flex h-[18px] items-center justify-between rounded-full bg-[#f1f2f4] px-1.5">
      <Thumb />
      <Thumb />
    </div>
  );
}

function PromoBar() {
  return (
    <div className="mx-[18px] mt-[33px] flex h-[78px] items-center rounded-t-[47px] bg-[#fcede4] pt-2.5 pl-[30px] whitespace-nowrap">
      <svg className="h-[40px] w-[46px] shrink-0" viewBox="0 0 46 40" fill="#ea5504">
        <path d="M0 13H5V28H0ZM9 12.5L40 4V0H45V40H40V37L27 33L24.5 37L15.5 34L16.5 30L9 28Z" />
      </svg>
      <div className="ml-[13px] h-[60px] w-[842px] overflow-hidden text-[38.7px] leading-[52px] tracking-[0.15px] text-[#d95a14] [mask-image:linear-gradient(90deg,transparent,#000_70px,#000_790px,transparent_860px)]">
        <span className="-ml-[22px]">【已汇总】今日涨停股都有哪些特点？速看解读&gt;&gt;</span>
      </div>
      <span className="ml-[24px] h-[36px] w-[1.5px] bg-[#cf6a35]" />
      <Cross className="ml-[15px]" />
    </div>
  );
}

const NAV_ITEMS = [
  {
    label: "交易",
    icon: (
      <>
        <path d="M13 7A28 28 0 0 1 54 44L61.500 39.500M54 44L55.500 36" />
        <path d="M47 52A28 28 0 0 1 5.500 16.500L-2.500 20M6.500 15.500L3.500 24" />
        <path d="M19.500 17.500L30 28L40.500 17.500M30 28V45M19.500 28.500H40.500M19.500 37H40.500" />
      </>
    ),
  },
  {
    label: "发帖",
    icon: (
      <>
        <path d="M41 3H11Q3 3 3 11V47Q3 55 11 55H47Q55 55 55 47V20" />
        <path d="M21 39L25 30.5L46 10L50 14L29 35.5ZM49 7L52 4L55.5 7.5L52.5 10.5Z" fill="#666" strokeWidth="2" />
      </>
    ),
  },
  {
    label: "功能",
    icon: (
      <>
        <rect x="4" y="5" width="23" height="22" rx="3" />
        <rect x="4" y="32" width="23" height="22" rx="3" />
        <rect x="31.5" y="32" width="22" height="22" rx="3" />
        <rect x="34" y="7.5" width="17.5" height="17.5" rx="3" transform="rotate(45 42.75 16.25)" />
      </>
    ),
  },
  {
    label: "设自选",
    icon: (
      <>
        <circle cx="29" cy="30" r="27" />
        {[17, 29, 41].map((x) => (
          <circle key={x} cx={x} cy="30" r="2" fill="#666" strokeWidth="2.4" />
        ))}
      </>
    ),
  },
];

function BottomNav() {
  return (
    <footer className="flex h-[176px] border-t-2 border-[#d8d8dc] bg-[#f7f8fa] text-[#666]">
      <div className="w-[274px] shrink-0">
        <svg className="mt-[8px] ml-[127px] block h-[7px] w-[21px]" viewBox="0 0 21 7" fill="#77777b"><path d="M10.5 0L21 7H0Z" /></svg>
        <div className="mt-[2px] ml-[69px] text-[39px] leading-[56px] text-[#d9302f]">3870.02</div>
        <div className="flex items-center justify-between pr-[9px] pl-[41px] text-[34.5px] leading-[42px]">
          <span>上证</span>
          <span className="text-[37px] tracking-[-1px] text-[#d9302f]">0.87%</span>
        </div>
      </div>
      {NAV_ITEMS.map((item) => (
        <div key={item.label} className="flex w-[201.5px] flex-col items-center">
          <svg className="mt-[8px] h-[60px] w-[58px] overflow-visible" viewBox="0 0 58 60" fill="none" stroke="#666" strokeWidth="2.8">
            {item.icon}
          </svg>
          <span className="mt-[14px] text-[35.5px] leading-[42px]">{item.label}</span>
        </div>
      ))}
    </footer>
  );
}

export default function App() {
  return (
    <div className="flex h-[2340px] w-[1080px] flex-col overflow-hidden bg-white font-['Noto_Sans_CJK_SC','Noto_Sans',sans-serif] font-normal">
      <StatusBar />
      <Header />
      <div className="flex h-[119px] items-center justify-between bg-[#fcede4] pr-[43px] pl-[36px] text-[42px] tracking-[0.1px] text-[#db5a14]">
        <span className="-mt-[4px]">K线读不懂，盘口上新形态诊断为您解读!</span>
        <Cross />
      </div>
      <Quote />
      <Tabs />
      <IndicatorRow />
      <PriceChart />
      <div className="flex h-[64px] items-center whitespace-nowrap">
        <Picker label="成交量" className="w-[152px]" />
        <Reading text="226.2万" arrow="down" className="ml-[4px] w-[168px] text-[#262626]" />
        <Reading text="MA1:207.3万" arrow="up" className="ml-[18px] w-[259px] tracking-[0.3px] text-[#e99a2b]" />
        <Reading text="MA2:168.1万" arrow="up" className="ml-[18px] w-[259px] tracking-[0.3px] text-[#c22fc9]" />
        <div className="mr-[12px] ml-auto flex h-[61px] w-[45px] items-center justify-center rounded-l-xl bg-[#979797]">
          <svg className="h-[28px] w-[17px]" viewBox="0 0 17 28" fill="none" stroke="#fff" strokeWidth="3.5">
            <path d="M15 2L3 14L15 26" />
          </svg>
        </div>
      </div>
      <VolumeChart />
      <div className="flex h-[65px] items-center whitespace-nowrap">
        <Picker label="资金趋势" className="w-[187px]" />
        <Reading text="-8.67亿" arrow="up" className="ml-[4px] w-[163px] tracking-[0.8px] text-[#262626]" />
        <Reading text="MA1:-11.67亿" arrow="down" className="ml-[18px] w-[279px] tracking-[0.9px] text-[#e99a2b]" />
        <Reading text="MA2:-7.75亿" arrow="up" className="ml-[18px] w-[257px] tracking-[0.9px] text-[#c22fc9]" />
      </div>
      <FundsChart />
      <div className="flex h-[64px] items-center whitespace-nowrap">
        <Picker label="MACD" className="w-[146px]" />
        <Reading text="DIF:-2.04" arrow="down" className="ml-[3px] w-[195px] tracking-[0.6px] text-[#262626]" />
        <Reading text="DEA:-0.13" arrow="down" className="ml-[18px] w-[213px] tracking-[0.6px] text-[#e99a2b]" />
        <Reading text="M:-3.81" arrow="down" className="ml-[18px] w-[170px] tracking-[0.6px] text-[#c22fc9]" />
      </div>
      <MacdChart />
      <div className="flex h-[64px] items-center whitespace-nowrap">
        <Picker label="两融差额" className="w-[187px]" />
        <Reading text="77.66亿一" className="ml-[4px] w-[186px] text-[#262626]" />
        <Reading text="变化量:" className="w-[137px] text-[#262626]" />
        <Reading text="8171.39万一" className="w-[220px] text-[#b93634]" />
      </div>
      <MarginChart />
      <DateAxis />
      <RangeSlider />
      <PromoBar />
      <BottomNav />
    </div>
  );
}
